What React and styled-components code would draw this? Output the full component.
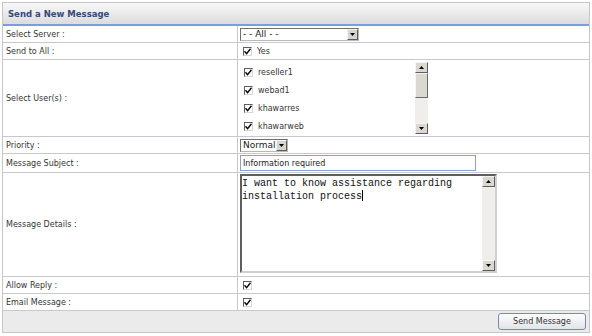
import React from "react";
import styled, { createGlobalStyle } from "styled-components";

const GlobalStyle = createGlobalStyle`
  body {
    margin: 0;
    background: #ffffff;
    font-family: "DejaVu Sans", Verdana, sans-serif;
  }
`;

const Page = styled.div`
  padding: 2px 0 0 2px;
  width: 592px;
  height: 336px;
  box-sizing: border-box;
`;

const Panel = styled.div`
  width: 588px;
  box-sizing: border-box;
  border: 1px solid #c6c6c6;
  background: #fff;
`;

const Header = styled.div`
  height: 21px;
  display: flex;
  align-items: center;
  padding-left: 5px;
  background: linear-gradient(#f8f8f8, #dcdcdc);
  border-bottom: 2px solid #7f9be0;
  font-size: 8.5px;
  font-weight: bold;
  color: #33497a;
`;

const Row = styled.div`
  display: grid;
  grid-template-columns: 235px 1fr;
  height: ${(p) => p.h}px;
  border-bottom: 1px solid #c6c9ce;
  box-sizing: border-box;
`;

const Label = styled.div`
  display: flex;
  align-items: center;
  padding-left: 3px;
  border-right: 1px solid #c6c9ce;
  font-size: 8px;
  color: #353535;
`;

const Value = styled.div`
  display: flex;
  align-items: ${(p) => (p.top ? "flex-start" : "center")};
  padding: ${(p) => (p.top ? "1px 0 0 2px" : "0 0 0 2px")};
  font-size: 8px;
  color: #353535;
`;

const SelectBox = styled.div`
  width: ${(p) => p.w}px;
  height: 13px;
  box-sizing: border-box;
  display: flex;
  align-items: center;
  justify-content: space-between;
  border: 1px solid #6f6f6f;
  border-right-color: #b8b8b8;
  border-bottom-color: #b8b8b8;
  background: #fff;
  font-size: 9px;
  color: #222;
  padding-left: 2px;
`;

const ArrowButton = styled.span`
  width: 11px;
  height: 11px;
  box-sizing: border-box;
  display: flex;
  align-items: center;
  justify-content: center;
  background: #d8d5ce;
  border: 1px solid;
  border-color: #f4f4f4 #5c5c5c #5c5c5c #f4f4f4;
`;

const Check = styled.span`
  width: 9px;
  height: 9px;
  box-sizing: border-box;
  flex: none;
  display: inline-flex;
  align-items: center;
  justify-content: center;
  background: #fff;
  border: 1px solid;
  border-color: #5e5e5e #d6d6d6 #d6d6d6 #5e5e5e;
`;

const CheckLine = styled.div`
  display: flex;
  align-items: center;
  gap: 5px;
  height: ${(p) => p.h || 16}px;
  padding-left: ${(p) => p.pad || 3}px;
`;

const ListBox = styled.div`
  width: 188px;
  height: 73px;
  display: flex;
  justify-content: space-between;
  margin-top: 1px;
`;

const ListItems = styled.div`
  padding-top: 1px;
`;

const ScrollBar = styled.div`
  width: 13px;
  height: ${(p) => p.h}px;
  display: flex;
  flex-direction: column;
  background: #efeeea;
`;

const ScrollBtn = styled.span`
  height: 11px;
  box-sizing: border-box;
  display: flex;
  align-items: center;
  justify-content: center;
  background: #dbd8d1;
  border: 1px solid;
  border-color: #f5f5f5 #5e5e5e #5e5e5e #f5f5f5;
`;

const Thumb = styled.span`
  height: 25px;
  box-sizing: border-box;
  background: #dbd8d1;
  border: 1px solid;
  border-color: #f5f5f5 #6a6a6a #6a6a6a #f5f5f5;
`;

const Track = styled.span`
  flex: 1;
`;

const TextInput = styled.div`
  width: 236px;
  height: 16px;
  box-sizing: border-box;
  display: flex;
  align-items: center;
  padding-left: 2px;
  border: 1px solid #8a9fd0;
  font-size: 8px;
  color: #222;
`;

const TextArea = styled.div`
  width: 257px;
  height: 99px;
  box-sizing: border-box;
  display: flex;
  justify-content: space-between;
  border: 2px solid;
  border-color: #5e5e5e #d0d0d0 #d0d0d0 #5e5e5e;
  background: #fff;
`;

const AreaText = styled.div`
  font-family: "Liberation Mono", "Courier New", monospace;
  font-size: 10px;
  line-height: 12px;
  color: #111;
  padding: 2px 0 0 0;
  white-space: pre;
`;

const Caret = styled.span`
  display: inline-block;
  width: 1px;
  height: 11px;
  background: #000;
  vertical-align: -2px;
`;

const Footer = styled.div`
  height: 21px;
  display: flex;
  align-items: center;
  justify-content: flex-end;
  padding-right: 3px;
  background: #ebebeb;
`;

const SendButton = styled.button`
  width: 88px;
  height: 17px;
  padding: 0;
  border: 1px solid #7d8aa3;
  border-radius: 3px;
  background: linear-gradient(#fdfdfd, #e2e4ea);
  font-family: "DejaVu Sans", Verdana, sans-serif;
  font-size: 8px;
  color: #333;
`;

const Arrow = ({ up }) => (
  <svg width="5" height="3" viewBox="0 0 5 3">
    <polygon points={up ? "0,3 5,3 2.5,0" : "0,0 5,0 2.5,3"} fill="#000" />
  </svg>
);

const Tick = () => (
  <svg width="7" height="7" viewBox="0 0 7 7">
    <path d="M0.5 3.2 L2.6 5.6 L6.5 0.8" stroke="#000" strokeWidth="1.4" fill="none" />
  </svg>
);

const CheckBox = () => (
  <Check>
    <Tick />
  </Check>
);

const users = ["reseller1", "webad1", "khawarres", "khawarweb"];

export default function App() {
  return (
    <Page>
      <GlobalStyle />
      <Panel>
        <Header>Send a New Message</Header>
        <Row h={17}>
          <Label>Select Server :</Label>
          <Value>
            <SelectBox w={119}>
              <span>- - All - -</span>
              <ArrowButton>
                <Arrow />
              </ArrowButton>
            </SelectBox>
          </Value>
        </Row>
        <Row h={17}>
          <Label>Send to All :</Label>
          <Value>
            <CheckLine>
              <CheckBox />
              <span>Yes</span>
            </CheckLine>
          </Value>
        </Row>
        <Row h={77}>
          <Label>Select User(s) :</Label>
          <Value top>
            <ListBox>
              <ListItems>
                {users.map((u) => (
                  <CheckLine key={u} h={18} pad={4}>
                    <CheckBox />
                    <span>{u}</span>
                  </CheckLine>
                ))}
              </ListItems>
              <ScrollBar h={72}>
                <ScrollBtn>
                  <Arrow up />
                </ScrollBtn>
                <Thumb />
                <Track />
                <ScrollBtn>
                  <Arrow />
                </ScrollBtn>
              </ScrollBar>
            </ListBox>
          </Value>
        </Row>
        <Row h={17}>
          <Label>Priority :</Label>
          <Value>
            <SelectBox w={48}>
              <span>Normal</span>
              <ArrowButton>
                <Arrow />
              </ArrowButton>
            </SelectBox>
          </Value>
        </Row>
        <Row h={19}>
          <Label>Message Subject :</Label>
          <Value>
            <TextInput>Information required</TextInput>
          </Value>
        </Row>
        <Row h={104}>
          <Label>Message Details :</Label>
          <Value top>
            <TextArea>
              <AreaText>
                {"I want to know assistance regarding\ninstallation process"}
                <Caret />
              </AreaText>
              <ScrollBar h={95}>
                <ScrollBtn>
                  <Arrow up />
                </ScrollBtn>
                <Track />
                <ScrollBtn>
                  <Arrow />
                </ScrollBtn>
              </ScrollBar>
            </TextArea>
          </Value>
        </Row>
        <Row h={17}>
          <Label>Allow Reply :</Label>
          <Value>
            <CheckLine>
              <CheckBox />
            </CheckLine>
          </Value>
        </Row>
        <Row h={17}>
          <Label>Email Message :</Label>
          <Value>
            <CheckLine>
              <CheckBox />
            </CheckLine>
          </Value>
        </Row>
        <Footer>
          <SendButton>Send Message</SendButton>
        </Footer>
      </Panel>
    </Page>
  );
}
